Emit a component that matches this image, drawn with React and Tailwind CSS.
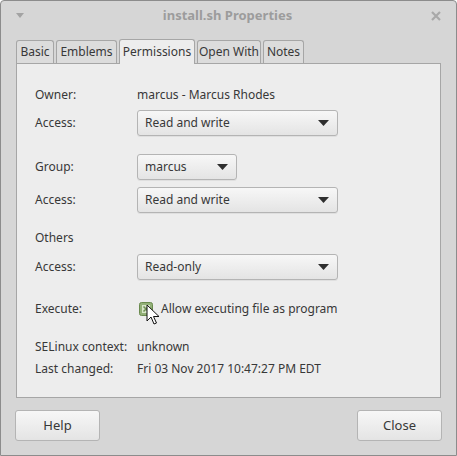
import React from "react";

const font = { fontFamily: '"Noto Sans", "DejaVu Sans", sans-serif' };

function Dropdown({ value, wide = true }) {
  return (
    <div
      className={`flex items-center justify-between h-[26px] rounded-[3px] border border-[#b4b4b4] bg-gradient-to-b from-[#f7f7f7] to-[#e4e4e4] shadow-[0_1px_0_rgba(0,0,0,0.06)] pl-[7px] pr-[8px] ${
        wide ? "w-[201px]" : "w-[100px]"
      }`}
    >
      <span>{value}</span>
      <svg width="11" height="6" viewBox="0 0 11 6">
        <path d="M0 0 H11 L5.5 6 Z" fill="#2e2e2e" />
      </svg>
    </div>
  );
}

function Row({ label, children, className = "" }) {
  return (
    <div className={`flex items-center ${className}`}>
      <div className="w-[102px] shrink-0">{label}</div>
      {children}
    </div>
  );
}

export default function App() {
  const tabs = [
    { name: "Basic", w: "w-[38px]" },
    { name: "Emblems", w: "w-[61px]" },
    { name: "Permissions", w: "w-[76px]", active: true },
    { name: "Open With", w: "w-[64px]" },
    { name: "Notes", w: "w-[41px]" },
  ];

  return (
    <div
      style={font}
      className="w-[457px] h-[456px] bg-[#d6d6d6] border border-[#8c8c8c] rounded-t-[4px] text-[12px] text-[#383838] flex flex-col overflow-hidden"
    >
      {/* title bar */}
      <div className="h-[29px] flex items-center justify-between px-[15px] shrink-0">
        <svg width="8" height="5" viewBox="0 0 8 5">
          <path d="M0 0 H8 L4 5 Z" fill="#a3a3a3" />
        </svg>
        <span className="font-bold text-[13px] text-[#9c9c9c]">install.sh Properties</span>
        <svg width="10" height="10" viewBox="0 0 10 10">
          <path d="M1 1 L9 9 M9 1 L1 9" stroke="#a8a8a8" strokeWidth="2.2" />
        </svg>
      </div>

      {/* tabs */}
      <div className="flex items-end gap-[2px] pl-[15px] h-[33px] shrink-0">
        {tabs.map((t) => (
          <div
            key={t.name}
            className={`${t.w} flex items-center justify-center whitespace-nowrap rounded-t-[3px] border border-b-0 border-[#a6a6a6] ${
              t.active
                ? "h-[25px] bg-[#ededed] relative top-[1px] z-10"
                : "h-[23px] bg-[#dcdcdc]"
            }`}
          >
            {t.name}
          </div>
        ))}
      </div>

      {/* panel */}
      <div className="mx-[15px] h-[335px] border border-[#a6a6a6] bg-[#ededed] flex flex-col pl-[18px] pt-[21px] shrink-0">
        <Row label="Owner:" className="h-[20px]">
          <span>marcus - Marcus Rhodes</span>
        </Row>
        <Row label="Access:" className="mt-[5px]">
          <Dropdown value="Read and write" />
        </Row>
        <Row label="Group:" className="mt-[18px]">
          <Dropdown value="marcus" wide={false} />
        </Row>
        <Row label="Access:" className="mt-[7px]">
          <Dropdown value="Read and write" />
        </Row>
        <div className="h-[20px] mt-[15px] flex items-center">Others</div>
        <Row label="Access:" className="mt-[6px]">
          <Dropdown value="Read-only" />
        </Row>
        <Row label="Execute:" className="h-[20px] mt-[19px]">
          <div className="relative flex items-center">
            <svg width="14" height="14" viewBox="0 0 14 14" className="ml-[2px]">
              <rect x="0.5" y="0.5" width="13" height="13" rx="2" fill="#92b077" stroke="#6a8a4e" />
              <rect x="3" y="3" width="8" height="8" fill="#d7e6c8" />
              <path d="M4.5 4.5 L9.5 9.5 M9.5 4.5 L4.5 9.5" stroke="#6f8f55" strokeWidth="1.6" />
            </svg>
            <span className="ml-[8px]">Allow executing file as program</span>
            <svg
              width="14"
              height="22"
              viewBox="0 0 14 22"
              className="absolute left-[9px] top-[4px]"
            >
              <path
                d="M1 1 L1 17 L5 13 L8 20 L10.5 19 L7.5 12.5 L13 12.5 Z"
                fill="#ffffff"
                stroke="#111111"
                strokeWidth="1"
                strokeLinejoin="round"
              />
            </svg>
          </div>
        </Row>
        <Row label="SELinux context:" className="h-[20px] mt-[18px]">
          <span>unknown</span>
        </Row>
        <Row label="Last changed:" className="h-[20px] mt-[2px]">
          <span>Fri 03 Nov 2017 10:47:27 PM EDT</span>
        </Row>
      </div>

      {/* buttons */}
      <div className="flex justify-between px-[14px] mt-[12px]">
        <button className="w-[85px] h-[31px] rounded-[3px] border border-[#b4b4b4] bg-gradient-to-b from-[#f7f7f7] to-[#e4e4e4] text-[13px]">
          Help
        </button>
        <button className="w-[85px] h-[31px] rounded-[3px] border border-[#b4b4b4] bg-gradient-to-b from-[#f7f7f7] to-[#e4e4e4] text-[13px]">
          Close
        </button>
      </div>
    </div>
  );
}
